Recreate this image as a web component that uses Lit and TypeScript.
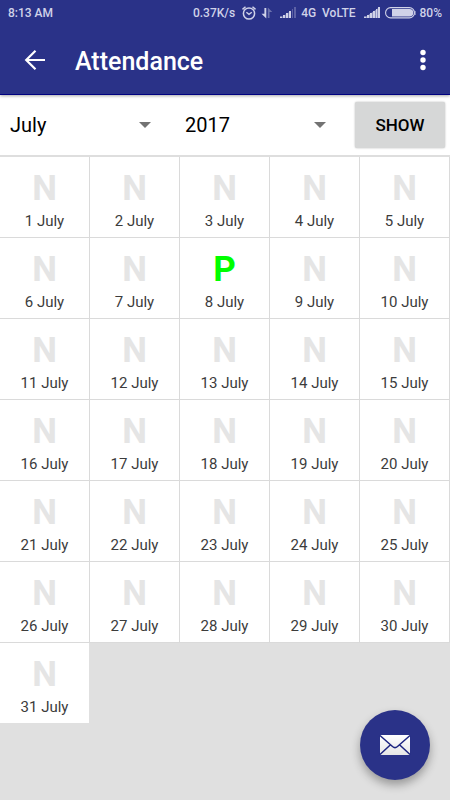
import { LitElement, html, css } from "lit";
import { customElement, property, state } from "lit/decorators.js";
import { classMap } from "lit/directives/class-map.js";

const MONTHS = [
  "January", "February", "March", "April", "May", "June",
  "July", "August", "September", "October", "November", "December",
];
const YEARS = [2015, 2016, 2017, 2018];

@customElement("status-bar")
class StatusBar extends LitElement {
  static styles = css`
    :host {
      display: flex;
      align-items: center;
      height: 25px;
      padding: 0 8px;
      font-size: 12px;
      font-weight: 500;
      color: #d0d2e8;
      white-space: nowrap;
    }
    .clock { flex: 1; }
    svg { display: block; flex: none; }
    .speed { margin-right: 7px; }
    .alarm { margin-right: 5px; }
    .data { margin-right: 7px; }
    .signal { margin-right: 5px; }
    .network { margin-right: 8px; }
    .battery { margin: 0 4px 0 5px; }
  `;

  render() {
    return html`
      <span class="clock">8:13 AM</span>
      <span class="speed">0.37K/s</span>
      <svg class="alarm" width="14" height="14" viewBox="0 0 14 14" fill="none" stroke="currentColor">
        <circle cx="7" cy="7.500" r="5.600" stroke-width="1.500" />
        <path d="M4.400 6.200 7 8.400l2.800-2.200" stroke-width="1.400" />
        <path d="M.5 3.400 3.500.8M13.500 3.400 10.500.8" stroke-width="1.500" />
      </svg>
      <svg class="data" width="12" height="12" viewBox="0 0 12 12" fill="currentColor">
        <path d="M3.400 1h1.900v10.500L.5 6.800h2.900z" />
        <path d="M6.800 11V.5L11.300 5H8.500v6z" opacity=".4" />
      </svg>
      <svg class="signal" width="16" height="11" viewBox="0 0 16 11" fill="currentColor">
        <path d="M0 9.500h2V11H0zM3 8h2v3H3zM6 6h2v5H6zM9 4h2v7H9z" />
        <path d="M0 11 11 4v7z" opacity=".4" />
        <path d="M12 2h1v9h-1zM14 0h2v11h-2z" opacity=".3" />
      </svg>
      <span class="network">4G&nbsp; VoLTE</span>
      <svg width="16" height="11" viewBox="0 0 16 11" fill="currentColor">
        <path d="M0 9.500h2V11H0zM3 8h2v3H3zM6 6h2v5H6zM9 4h2v7H9zM12 2h1v9h-1zM14 0h2v11h-2z" />
        <path d="M0 11 16 0v11z" opacity=".6" />
      </svg>
      <svg class="battery" width="31" height="12" viewBox="0 0 31 12">
        <rect x=".6" y=".6" width="28.800" height="10.300" rx="5" fill="none" stroke="currentColor" stroke-width="1.100" />
        <path d="M7 2h17.500a3.700 3.700 0 0 1 0 7.500H7z" fill="currentColor" />
        <path d="M30 4v4" stroke="currentColor" />
      </svg>
      <span>80%</span>
    `;
  }
}

@customElement("day-cell")
class DayCell extends LitElement {
  @property() mark = "N";
  @property() label = "";

  static styles = css`
    :host {
      display: flex;
      flex-direction: column;
      align-items: center;
      box-sizing: border-box;
      height: 81px;
      padding-top: 12px;
      background: #fff;
      border-right: 1px solid #dadada;
      border-bottom: 1px solid #dadada;
    }
    .mark {
      font-size: 35px;
      line-height: 40px;
      font-weight: 700;
      color: #e5e5e5;
    }
    .present { color: #00ff00; }
    .date {
      font-size: 15px;
      line-height: 24px;
      color: #3c3c3c;
    }
  `;

  render() {
    return html`
      <span class=${classMap({ mark: true, present: this.mark === "P" })}>${this.mark}</span>
      <span class="date">${this.label}</span>
    `;
  }
}

@customElement("app-root")
class AppRoot extends LitElement {
  @state() month = "July";
  @state() year = 2017;
  @state() shownMonth = "July";
  @state() shownYear = 2017;

  static styles = css`
    :host {
      display: flex;
      flex-direction: column;
      min-height: 100vh;
      background: #e0e0e0;
      font-family: Roboto, sans-serif;
    }
    header {
      position: relative;
      z-index: 1;
      background: #2a3288;
      border-bottom: 1px solid #000080;
      box-shadow: 0 1px 3px rgba(0, 0, 0, 0.35);
    }
    .bar {
      display: flex;
      align-items: center;
      height: 69px;
      padding: 0 8px 0 16px;
      color: #fff;
    }
    h1 {
      flex: 1;
      margin: 0 0 0 21px;
      padding-top: 4px;
      font-size: 25px;
      line-height: 32px;
      font-weight: 500;
    }
    button {
      font: inherit;
      border: 0;
      padding: 0;
      cursor: pointer;
    }
    .icon {
      display: flex;
      align-items: center;
      justify-content: center;
      width: 38px;
      height: 38px;
      color: inherit;
      background: none;
    }
    .filters {
      display: flex;
      align-items: center;
      height: 60px;
      padding-right: 5px;
      background: #fff;
      border-bottom: 2px solid #dedede;
    }
    .field {
      position: relative;
      flex: 1;
    }
    select {
      appearance: none;
      display: block;
      width: 100%;
      height: 40px;
      border: 0;
      padding: 0 40px 0 10px;
      font: 400 20px / 40px Roboto, sans-serif;
      color: #000;
      background: none;
    }
    .caret {
      position: absolute;
      right: 24px;
      top: 17px;
      pointer-events: none;
    }
    .show {
      width: 90px;
      height: 46px;
      margin-left: 5px;
      border-radius: 2px;
      background: #d6d7d7;
      box-shadow: 0 0 2px rgba(0, 0, 0, 0.3);
      font-size: 17px;
      font-weight: 500;
      color: #000;
    }
    .days {
      display: grid;
      grid-template-columns: repeat(5, 1fr);
    }
    .days day-cell:last-child {
      height: 80px;
      border-bottom: 0;
      border-right-color: #e0e0e0;
    }
    .fab {
      position: fixed;
      right: 20px;
      bottom: 20px;
      display: flex;
      align-items: center;
      justify-content: center;
      width: 70px;
      height: 70px;
      border-radius: 50%;
      background: #2a3288;
      box-shadow: 0 5px 10px rgba(0, 0, 0, 0.32);
    }
  `;

  private show() {
    this.shownMonth = this.month;
    this.shownYear = this.year;
  }

  private caret() {
    return html`<svg class="caret" width="12" height="6" viewBox="0 0 12 6"><path d="M0 0h12L6 6z" fill="#737373" /></svg>`;
  }

  render() {
    const count = new Date(this.shownYear, MONTHS.indexOf(this.shownMonth) + 1, 0).getDate();
    const days = Array.from({ length: count }, (_, i) => i + 1);
    return html`
      <header>
        <status-bar></status-bar>
        <div class="bar">
          <button class="icon" aria-label="Back">
            <svg width="22" height="22" viewBox="0 0 22 22" fill="none" stroke="#fff" stroke-width="2.200">
              <path d="M21 11H3M11.500 1.700 2.200 11l9.300 9.300" />
            </svg>
          </button>
          <h1>Attendance</h1>
          <button class="icon" aria-label="More options">
            <svg width="6" height="22" viewBox="0 0 6 22" fill="#fff">
              <circle cx="3" cy="3.500" r="2.700" /><circle cx="3" cy="11" r="2.700" /><circle cx="3" cy="18.500" r="2.700" />
            </svg>
          </button>
        </div>
      </header>
      <div class="filters">
        <div class="field">
          <select aria-label="Month" @change=${(e: Event) => (this.month = (e.target as HTMLSelectElement).value)}>
            ${MONTHS.map((m) => html`<option ?selected=${m === this.month}>${m}</option>`)}
          </select>
          ${this.caret()}
        </div>
        <div class="field">
          <select aria-label="Year" @change=${(e: Event) => (this.year = Number((e.target as HTMLSelectElement).value))}>
            ${YEARS.map((y) => html`<option ?selected=${y === this.year}>${y}</option>`)}
          </select>
          ${this.caret()}
        </div>
        <button class="show" @click=${this.show}>SHOW</button>
      </div>
      <main class="days">
        ${days.map(
          (d) => html`<day-cell mark=${d === 8 ? "P" : "N"} label="${d} ${this.shownMonth}"></day-cell>`
        )}
      </main>
      <button class="fab" aria-label="Send message">
        <svg width="32" height="22" viewBox="0 0 32 22">
          <defs>
            <linearGradient id="paper" x1="0" y1="0" x2="0" y2="1">
              <stop offset="0" stop-color="#fff" /><stop offset="1" stop-color="#e6e6e6" />
            </linearGradient>
          </defs>
          <rect x="1" y="1" width="30" height="20" rx="1" fill="url(#paper)" />
          <path d="M1 1.500 13.500 12.500q2.500 2.200 5 0L31 1.500M1 20.500l10.500-9.800M31 20.500l-10.500-9.800" fill="none" stroke="#1c2480" stroke-width="1.500" />
        </svg>
      </button>
    `;
  }
}
